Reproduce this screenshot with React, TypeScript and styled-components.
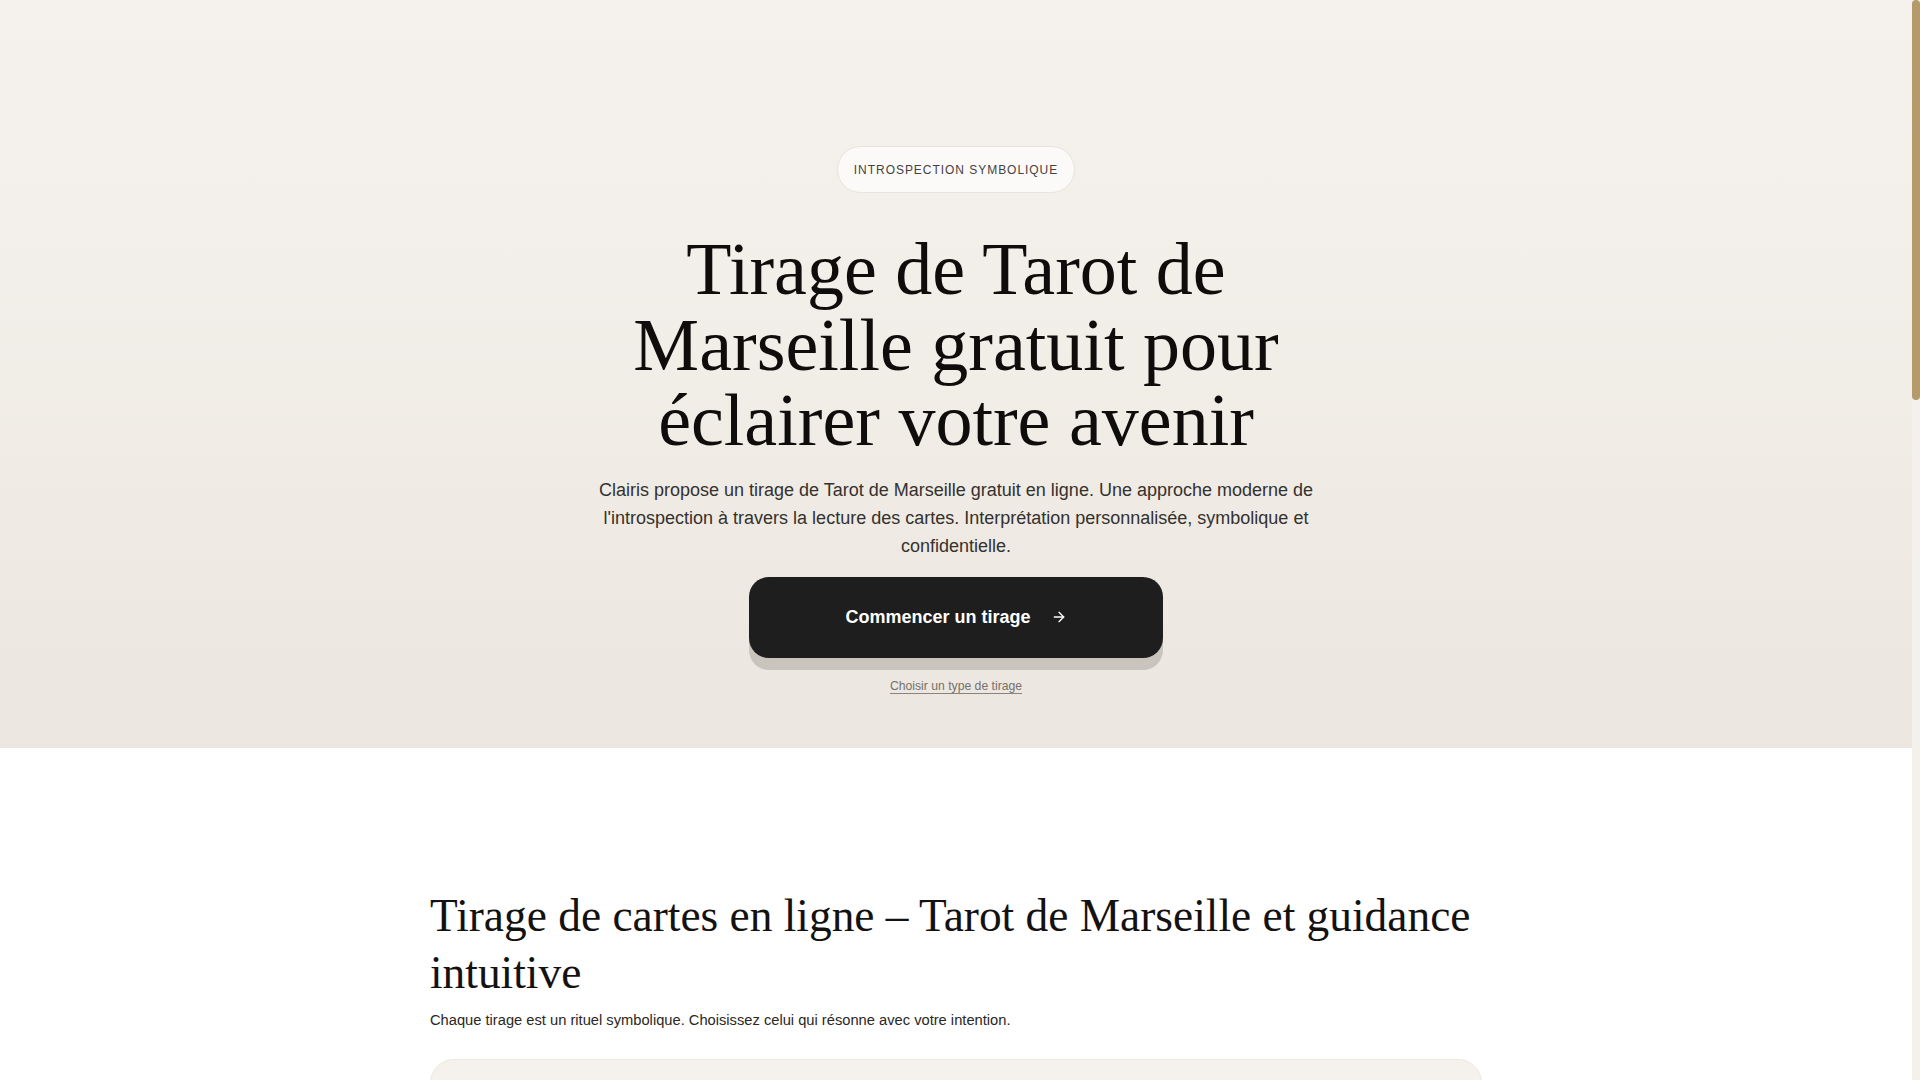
import React from "react";
import styled, { createGlobalStyle } from "styled-components";
import { ArrowRight } from "lucide-react";

const GlobalStyle = createGlobalStyle`
  html, body {
    margin: 0;
    padding: 0;
    font-family: "Liberation Sans", Arial, sans-serif;
    color: #1c1a18;
  }
  body { padding-right: 8px; background: #f4f1ec; }
  #root { background: #ffffff; }
  * { box-sizing: border-box; }
  ::-webkit-scrollbar { width: 0; height: 0; }
`;

const ScrollThumb = styled.div`
  position: fixed;
  top: 0;
  right: 0;
  width: 8px;
  height: 400px;
  border-radius: 4px;
  background: #b59a6a;
  z-index: 10;
`;

const Hero = styled.section`
  display: flex;
  flex-direction: column;
  align-items: center;
  padding: 146px 24px 55px;
  background: linear-gradient(180deg, #f5f2ed 0%, #f1ede7 50%, #ebe6df 100%);
  text-align: center;
`;

const Badge = styled.span`
  display: inline-flex;
  align-items: center;
  height: 47px;
  padding: 0 16px;
  border-radius: 999px;
  background: #fbfaf8;
  border: 1px solid #e7e3dd;
  font-size: 12px;
  letter-spacing: 0.08em;
  color: #46423d;
  text-transform: uppercase;
`;

const Title = styled.h1`
  margin: 39px 0 0;
  max-width: 720px;
  font-family: "Liberation Serif", "Times New Roman", serif;
  font-weight: 400;
  font-size: 74px;
  line-height: 75.5px;
  color: #0f0d0b;
`;

const Lead = styled.p`
  margin: 17px 0 0;
  max-width: 720px;
  font-size: 18px;
  line-height: 28px;
  color: #34312e;
`;

const CtaButton = styled.button`
  margin-top: 17px;
  display: inline-flex;
  align-items: center;
  justify-content: center;
  gap: 20px;
  width: 414px;
  height: 81px;
  border: none;
  border-radius: 20px;
  background: #1e1e1e;
  color: #ffffff;
  font-family: "Liberation Sans", Arial, sans-serif;
  font-size: 18px;
  font-weight: 700;
  box-shadow: 0 12px 0 #c9c4bc;
  cursor: pointer;
`;

const SubLink = styled.a`
  margin-top: 21px;
  font-size: 12.2px;
  color: #77716a;
  text-decoration: underline;
  text-underline-offset: 3px;
  text-decoration-color: #8a847c;
`;

const Section = styled.section`
  background: #ffffff;
  padding: 140px 24px 160px;
`;

const Container = styled.div`
  max-width: 1052px;
  margin: 0 auto;
`;

const SectionTitle = styled.h2`
  margin: 0;
  font-family: "Liberation Serif", "Times New Roman", serif;
  font-weight: 400;
  font-size: 45.4px;
  line-height: 57.5px;
  color: #141210;
`;

const SectionIntro = styled.p`
  margin: 6px 0 0;
  font-size: 14.7px;
  line-height: 22px;
  color: #2a2724;
`;

const CardList = styled.div`
  margin-top: 28px;
  display: flex;
  flex-direction: column;
  gap: 24px;
`;

const Card = styled.article`
  display: flex;
  flex-direction: column;
  gap: 14px;
  padding: 40px 44px;
  min-height: 380px;
  border-radius: 24px;
  background: #f5f2ed;
  border: 1px solid #ece8e2;
`;

const CardTag = styled.span`
  font-size: 12px;
  letter-spacing: 0.08em;
  text-transform: uppercase;
  color: #8a7a5c;
`;

const CardTitle = styled.h3`
  margin: 0;
  font-family: "Liberation Serif", "Times New Roman", serif;
  font-weight: 400;
  font-size: 32px;
  color: #1a1816;
`;

const CardText = styled.p`
  margin: 0;
  max-width: 640px;
  font-size: 15px;
  line-height: 24px;
  color: #3a3733;
`;

const cards = [
  {
    tag: "1 carte",
    title: "Tirage en une carte",
    text: "Une réponse simple et directe pour éclairer une question du moment.",
  },
  {
    tag: "3 cartes",
    title: "Passé, présent, avenir",
    text: "Explorez l'évolution d'une situation à travers trois arcanes du Tarot de Marseille.",
  },
  {
    tag: "5 cartes",
    title: "Tirage en croix",
    text: "Une lecture complète pour comprendre les forces en présence et la synthèse de votre situation.",
  },
];

export default function App() {
  return (
    <>
      <GlobalStyle />
      <ScrollThumb aria-hidden="true" />
      <Hero>
        <Badge>Introspection symbolique</Badge>
        <Title>Tirage de Tarot de Marseille gratuit pour éclairer votre avenir</Title>
        <Lead>
          Clairis propose un tirage de Tarot de Marseille gratuit en ligne. Une approche moderne de
          l'introspection à travers la lecture des cartes. Interprétation personnalisée, symbolique et
          confidentielle.
        </Lead>
        <CtaButton>
          Commencer un tirage
          <ArrowRight size={16} strokeWidth={2} />
        </CtaButton>
        <SubLink href="#tirages">Choisir un type de tirage</SubLink>
      </Hero>
      <Section id="tirages">
        <Container>
          <SectionTitle>Tirage de cartes en ligne – Tarot de Marseille et guidance intuitive</SectionTitle>
          <SectionIntro>
            Chaque tirage est un rituel symbolique. Choisissez celui qui résonne avec votre intention.
          </SectionIntro>
          <CardList>
            {cards.map((c) => (
              <Card key={c.title}>
                <CardTag>{c.tag}</CardTag>
                <CardTitle>{c.title}</CardTitle>
                <CardText>{c.text}</CardText>
              </Card>
            ))}
          </CardList>
        </Container>
      </Section>
    </>
  );
}
